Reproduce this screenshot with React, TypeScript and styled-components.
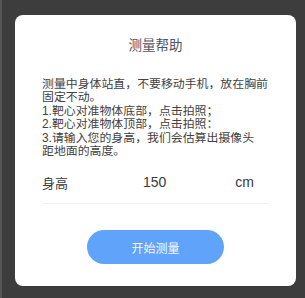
import React from 'react';
import styled, {createGlobalStyle} from 'styled-components';

const GlobalStyle = createGlobalStyle`
  html, body {
    margin: 0;
    padding: 0;
    background: #3d3d3d;
  }
  body {
    font-family: "Liberation Sans", "Noto Sans CJK SC", sans-serif;
  }
`;

const Page = styled.div`
  box-sizing: border-box;
  min-height: 298px;
  width: 305px;
  padding: 15px 9px 12px 13px;
  background: #3d3d3d;
  border-left: 2px solid #565656;
`;

const Card = styled.div`
  box-sizing: border-box;
  width: 281px;
  height: 271px;
  background: #ffffff;
  border-radius: 8px;
  padding: 21px 27px 22px;
  display: flex;
  flex-direction: column;
`;

const Title = styled.div`
  text-align: center;
  font-size: 13.5px;
  line-height: 20px;
  color: #4e5366;
`;

const Help = styled.div`
  margin-top: 22px;
  font-size: 11.9px;
  line-height: 13.4px;
  color: #424242;
  white-space: nowrap;
`;

const Row = styled.div`
  margin-top: 3px;
  height: 42px;
  display: flex;
  align-items: center;
  border-bottom: 1px solid #f1f1f1;
  font-size: 13px;
  color: #3a3a3a;
`;

const Label = styled.span`
  width: 101px;
`;

const Value = styled.span`
  flex: 1;
  font-size: 14px;
`;

const Unit = styled.span`
  padding-right: 15px;
  font-size: 14px;
`;

const Button = styled.button`
  align-self: center;
  margin-top: 26px;
  width: 137px;
  height: 34px;
  border: none;
  border-radius: 17px;
  background: #60a3fb;
  color: #f4f8ff;
  font-family: inherit;
  font-size: 12px;
  cursor: pointer;
`;

export default function App() {
  return (
    <Page>
      <GlobalStyle />
      <Card>
        <Title>测量帮助</Title>
        <Help>
          测量中身体站直，不要移动手机，放在胸前
          <br />
          固定不动。
          <br />
          1.靶心对准物体底部，点击拍照；
          <br />
          2.靶心对准物体顶部，点击拍照：
          <br />
          3.请输入您的身高，我们会估算出摄像头
          <br />
          距地面的高度。
        </Help>
        <Row>
          <Label>身高</Label>
          <Value>150</Value>
          <Unit>cm</Unit>
        </Row>
        <Button>开始测量</Button>
      </Card>
    </Page>
  );
}
